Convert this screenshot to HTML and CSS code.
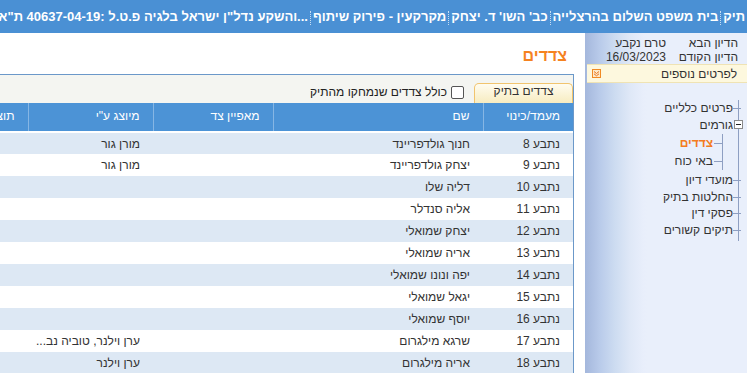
FILE: index.html
```html
<!DOCTYPE html>
<html lang="he" dir="rtl">
<head>
<meta charset="utf-8">
<title>צדדים</title>
<link rel="stylesheet" href="styles.css">
</head>
<body>
<header class="topbar">
  <div class="crumbs"><span class="seg">תיק</span><span class="sep"></span><span class="seg">בית משפט השלום בהרצלייה</span><span class="sep"></span><span class="seg">כב' השו' ד. יצחק</span><span class="sep"></span><span class="seg">מקרקעין - פירוק שיתוף</span><span class="sep"></span><span class="seg ltr" dir="ltr">ת"א&lrm; 40637-04-19:&lrm; פ.ט.ל&lrm; בלגיה&lrm; ישראל&lrm; נדל"ן&lrm; והשקע...&lrm;</span></div>
</header>
<div class="layout">
  <aside class="sidebar">
    <div class="info">
      <span>הדיון הבא</span><span>טרם נקבע</span>
      <span>הדיון הקודם</span><span>16/03/2023</span>
    </div>
    <div class="more">
      <span>לפרטים נוספים</span>
      <svg class="more-icon" width="9" height="9" viewBox="0 0 9 9"><rect x="0.5" y="0.5" width="8" height="8" fill="#fde9c8" stroke="#f08a24"/><path d="M2 2.5 L4.5 4.5 L7 2.5 M2 4.8 L4.5 6.8 L7 4.8" fill="none" stroke="#e8731a" stroke-width="1"/></svg>
    </div>
    <ul class="tree">
      <li>פרטים כלליים</li>
      <li class="open"><span class="toggle"></span>גורמים
        <ul class="sub">
          <li class="active">צדדים</li>
          <li>באי כוח</li>
        </ul>
      </li>
      <li>מועדי דיון</li>
      <li>החלטות בתיק</li>
      <li>פסקי דין</li>
      <li>תיקים קשורים</li>
    </ul>
  </aside>
  <main class="main">
    <h1 class="title">צדדים</h1>
    <section class="panel">
      <div class="toolbar">
        <div class="tab">צדדים בתיק</div>
        <label class="check"><span class="box"></span><span>כולל צדדים שנמחקו מהתיק</span></label>
      </div>
      <table class="grid">
        <colgroup><col class="c1"><col class="c2"><col class="c3"><col class="c4"><col></colgroup>
        <thead>
          <tr><th>מעמד/כינוי</th><th>שם</th><th>מאפיין צד</th><th>מיוצג ע"י</th><th>תוצאה</th></tr>
        </thead>
        <tbody>
          <tr><td>נתבע 8</td><td>חנוך גולדפריינד</td><td></td><td>מורן גור</td><td></td></tr>
          <tr><td>נתבע 9</td><td>יצחק גולדפריינד</td><td></td><td>מורן גור</td><td></td></tr>
          <tr><td>נתבע 10</td><td>דליה שלו</td><td></td><td></td><td></td></tr>
          <tr><td>נתבע 11</td><td>אליה סנדלר</td><td></td><td></td><td></td></tr>
          <tr><td>נתבע 12</td><td>יצחק שמואלי</td><td></td><td></td><td></td></tr>
          <tr><td>נתבע 13</td><td>אריה שמואלי</td><td></td><td></td><td></td></tr>
          <tr><td>נתבע 14</td><td>יפה ונונו שמואלי</td><td></td><td></td><td></td></tr>
          <tr><td>נתבע 15</td><td>יגאל שמואלי</td><td></td><td></td><td></td></tr>
          <tr><td>נתבע 16</td><td>יוסף שמואלי</td><td></td><td></td><td></td></tr>
          <tr><td>נתבע 17</td><td>שרגא מילגרום</td><td></td><td>ערן וילנר, טוביה נב...</td><td></td></tr>
          <tr><td>נתבע 18</td><td>אריה מילגרום</td><td></td><td>ערן וילנר</td><td></td></tr>
        </tbody>
      </table>
    </section>
  </main>
</div>
</body>
</html>
```
FILE: styles.css
```css
* { box-sizing: border-box; }
html, body { margin: 0; padding: 0; }
body {
  font-family: "Liberation Sans", Arial, sans-serif;
  font-size: 12px;
  color: #333;
  background: #fff;
  overflow: hidden;
  width: 747px;
  height: 373px;
}
.topbar {
  height: 33px;
  background: #4a90d4;
  color: #fff;
  font-weight: bold;
  font-size: 13px;
  overflow: hidden;
  padding: 9px 2px 0 0;
}
.crumbs {
  white-space: nowrap;
  text-align: right;
  line-height: 15px;
}
.seg.ltr { unicode-bidi: isolate; }
.sep {
  display: inline-block;
  vertical-align: middle;
  width: 0;
  height: 14px;
  border-left: 1px dotted rgba(255, 255, 255, 0.7);
  margin: 0 2px;
}
.layout { display: flex; height: 340px; }
.sidebar {
  width: 162px;
  flex-shrink: 0;
  background: linear-gradient(to right, #a4b7dc 0, #b9cbea 15px, #cddcf1 30px, #dfe8f7 45px, #e8eefb 58px, #e9effb 62px);
}
.info {
  display: grid;
  grid-template-columns: 72px auto;
  padding: 3px 9px 0 0;
  line-height: 14px;
  color: #333;
}
.more {
  height: 19px;
  margin-left: 2px;
  background: #fdf8de;
  border-top: 1px solid #efe3b4;
  border-bottom: 1px solid #efe3b4;
  display: flex;
  align-items: center;
  justify-content: space-between;
  padding: 0 10px 0 5px;
}
.more-icon { display: block; }
.tree {
  list-style: none;
  margin: 17px 8px 0 0;
  padding: 0 0 3px 0;
  border-right: 1px solid #8e9fc2;
}
.tree li {
  position: relative;
  padding-right: 5px;
  line-height: 16.5px;
  color: #333;
}
.tree li::before {
  content: "";
  position: absolute;
  right: -3px;
  top: 8px;
  width: 8px;
  border-top: 1px solid #8e9fc2;
}
.tree li.open::before { display: none; }
.toggle {
  position: absolute;
  right: -5px;
  top: 3px;
  width: 9px;
  height: 9px;
  border: 1px solid #8a8a8a;
  background: #fff;
}
.toggle::after {
  content: "";
  position: absolute;
  left: 1px;
  right: 1px;
  top: 3px;
  border-top: 1px solid #222;
}
.tree .sub {
  list-style: none;
  margin: 1px 10px 2px 0;
  padding: 0;
  border-right: 1px solid #8e9fc2;
}
.tree .sub li { padding-right: 9px; line-height: 18px; }
.tree .sub li::before { right: 0; top: 9px; width: 8px; }
.tree .sub li.active { color: #f47b20; font-weight: bold; }
.main { flex: 1; min-width: 0; overflow: hidden; }
.title {
  margin: 13px 18px 0 0;
  font-size: 16px;
  line-height: 20px;
  font-weight: bold;
  color: #f5821f;
}
.panel {
  width: 720px;
  margin: 8px 11px 0 0;
  border-top: 1px solid #6b98c9;
  border-right: 1px solid #6b98c9;
  background: #f4f5f1;
}
.toolbar {
  display: flex;
  align-items: flex-end;
  gap: 10px;
  height: 28px;
}
.tab {
  width: 99px;
  height: 20px;
  border: 1px solid #f1c46e;
  border-bottom: none;
  border-radius: 5px 5px 0 0;
  background: linear-gradient(#fffcf0, #f7ecc0);
  text-align: center;
  line-height: 15px;
  color: #333;
}
.check {
  display: flex;
  align-items: center;
  gap: 4px;
  margin-bottom: 4px;
  color: #222;
}
.box {
  width: 13px;
  height: 13px;
  border: 1px solid #555;
  border-radius: 2px;
  background: #fff;
}
.grid {
  width: 100%;
  border-collapse: collapse;
  table-layout: fixed;
  background: #fff;
}
.grid .c1 { width: 90px; }
.grid .c2 { width: 210px; }
.grid .c3 { width: 120px; }
.grid .c4 { width: 125px; }
.grid th {
  height: 29px;
  background: #4c93d6;
  color: #fff;
  font-weight: normal;
  text-align: right;
  padding: 0 13px 2px 4px;
  border-left: 1px solid #86b6e4;
  border-bottom: 2px solid #fff;
  white-space: nowrap;
  overflow: hidden;
}
.grid td {
  height: 22px;
  padding: 0 13px 0 4px;
  text-align: right;
  white-space: nowrap;
  overflow: hidden;
  color: #333;
}
.grid tbody tr:nth-child(odd) td { background: #dde8f4; }
```
